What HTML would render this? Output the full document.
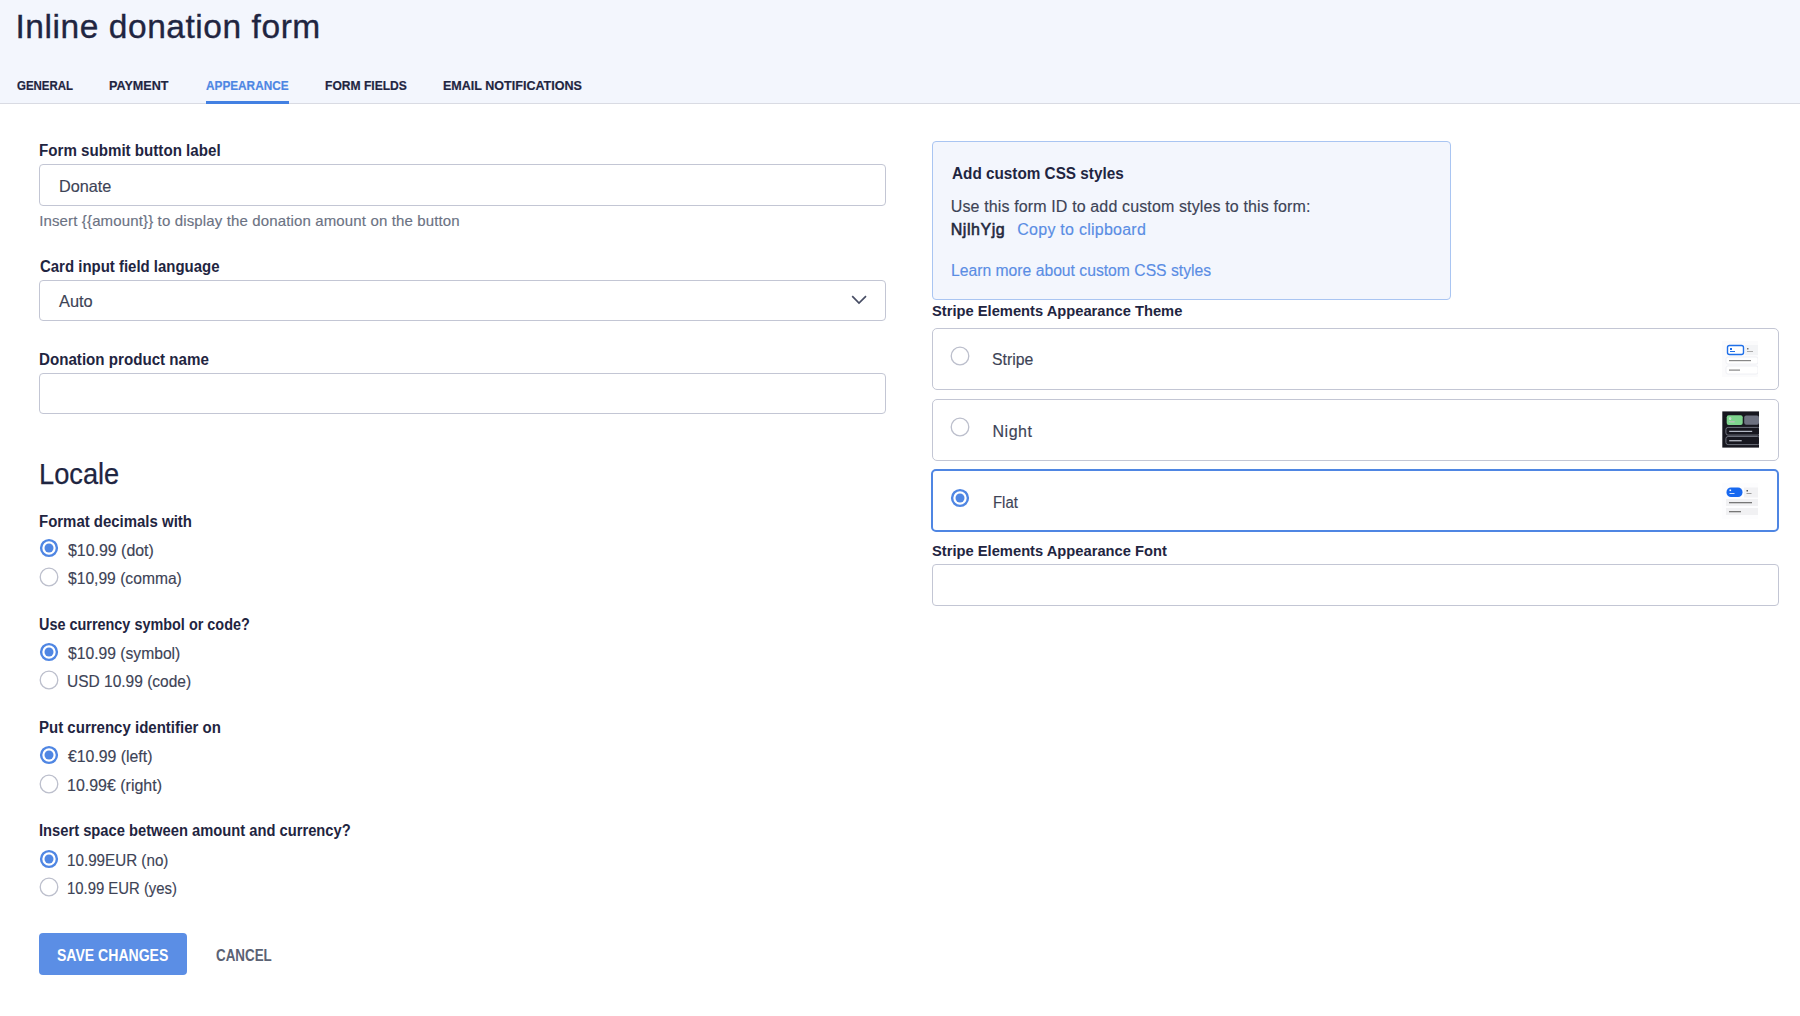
<!DOCTYPE html>
<html><head><meta charset="utf-8"><title>Inline donation form</title>
<style>
html,body{margin:0;padding:0;}
body{width:1800px;height:1016px;position:relative;overflow:hidden;background:#fff;font-family:"Liberation Sans",sans-serif;}
.t{position:absolute;white-space:nowrap;}
.hdr{position:absolute;left:0;top:0;width:1800px;height:103px;background:#f3f6fd;border-bottom:1px solid #d9dbe3;}
.ul{position:absolute;left:206px;top:101px;width:83px;height:3px;background:#4280e2;}
.box{position:absolute;box-sizing:border-box;border:1px solid #c3c6d4;border-radius:4px;background:#fff;}
.css{position:absolute;box-sizing:border-box;left:932px;top:141px;width:519px;height:159px;border:1px solid #a9c5f2;border-radius:4px;background:#f3f6fd;}
.card{position:absolute;box-sizing:border-box;left:932px;width:847px;height:62px;border:1px solid #c3c6d4;border-radius:5px;background:#fff;}
.card.sel{border:2px solid #4f86e3;}
.btn{position:absolute;left:39px;top:933px;width:148px;height:42px;border-radius:4px;background:#5b8ee5;}
.th{position:absolute;}
</style></head><body>
<div class="hdr"></div>
<div class="ul"></div>
<div class="box" style="left:39px;top:164px;width:847px;height:42px"></div>
<div class="box" style="left:39px;top:280px;width:847px;height:41px"></div>
<div class="box" style="left:39px;top:373px;width:847px;height:41px"></div>
<svg class="th" style="left:849px;top:292px" width="20" height="14" viewBox="0 0 20 14"><path d="M3.2 4.2 L10 11 L17 4.2" fill="none" stroke="#474d64" stroke-width="1.7"/></svg>
<div class="css"></div>
<div class="card" style="top:328px"></div>
<div class="card" style="top:399px"></div>
<div class="card sel" style="left:931px;top:469px;width:848px;height:63px"></div>
<div class="box" style="left:932px;top:564px;width:847px;height:42px"></div>
<div class="btn"></div>
<svg class="th" style="left:1722px;top:341px" width="36" height="36" viewBox="0 0 36 36">
<rect x="0" y="0" width="36" height="36" fill="#fbfbfc"/>
<rect x="5.5" y="4.5" width="16" height="9" rx="2" fill="#fff" stroke="#1f6fe8" stroke-width="1.4"/>
<rect x="8" y="7" width="2" height="2" fill="#1f6fe8"/><rect x="8" y="10" width="5" height="1" fill="#1f6fe8"/>
<rect x="23" y="4" width="13" height="10" fill="#f3f4f6"/><rect x="25" y="7" width="1.5" height="1.5" fill="#777"/><rect x="25" y="10" width="6" height="0.8" fill="#999"/>
<rect x="4" y="16" width="32" height="7" rx="2" fill="#fff" stroke="#eceef2" stroke-width="0.8"/>
<rect x="7" y="19" width="22" height="1.2" fill="#888"/>
<rect x="4" y="25" width="32" height="8" rx="2" fill="#fff" stroke="#eceef2" stroke-width="0.8"/>
<rect x="7" y="28.5" width="11" height="1.2" fill="#888"/>
</svg>
<svg class="th" style="left:1722px;top:411px" width="37" height="37" viewBox="0 0 37 37">
<rect x="0.3" y="0.4" width="36.7" height="36.2" fill="#17171f"/>
<rect x="4.7" y="4.3" width="16" height="9.7" rx="2" fill="#7fd48e"/>
<rect x="7.5" y="6.5" width="1.2" height="2.2" fill="#fff"/><rect x="7.5" y="10.3" width="5" height="0.9" fill="#e8f5ea"/>
<rect x="22.2" y="4.5" width="14.8" height="9.3" rx="2" fill="#6d7180"/>
<rect x="8" y="6.8" width="1.4" height="1.4" fill="#ccc"/><rect x="8" y="10.3" width="5" height="0.8" fill="#aaa"/>
<rect x="3.9" y="16.4" width="34" height="7.7" rx="2.2" fill="none" stroke="#777a86" stroke-width="0.9"/>
<rect x="7.2" y="19.8" width="23" height="1.1" fill="#c5cad6"/>
<rect x="3.9" y="25.5" width="34" height="8.1" rx="2.2" fill="none" stroke="#777a86" stroke-width="0.9"/>
<rect x="7.2" y="29.2" width="12.5" height="1.1" fill="#d0d4de"/>
</svg>
<svg class="th" style="left:1722px;top:483px" width="36" height="36" viewBox="0 0 36 36">
<rect x="0" y="0" width="36" height="36" fill="#fdfdfe"/>
<rect x="4.5" y="4.5" width="16" height="9.5" rx="4.5" fill="#1768f0"/>
<rect x="7.5" y="6.5" width="1.6" height="1.6" fill="#fff"/><rect x="7.5" y="10" width="5" height="0.8" fill="#fff"/>
<rect x="22" y="4.5" width="14" height="10" fill="#f2f2f4"/><rect x="24.5" y="7" width="1.5" height="1.5" fill="#555"/><rect x="24.5" y="10" width="5" height="0.8" fill="#888"/>
<rect x="4" y="16" width="32" height="7" fill="#f1f1f3"/>
<rect x="7" y="19" width="23" height="1.3" fill="#777"/>
<rect x="4" y="25" width="32" height="7" fill="#f1f1f3"/>
<rect x="7" y="28" width="12" height="1.3" fill="#777"/>
</svg>
<svg class="th" style="left:38.5px;top:538.4px" width="20" height="20" viewBox="0 0 20 20"><circle cx="10" cy="10" r="7.9" fill="#fff" stroke="#4f86e3" stroke-width="2.4"/><circle cx="10" cy="10" r="4.5" fill="#4f86e3"/></svg><svg class="th" style="left:38.5px;top:566.9px" width="20" height="20" viewBox="0 0 20 20"><circle cx="10" cy="10" r="8.8" fill="#fff" stroke="#bcbfcc" stroke-width="1.3"/></svg><svg class="th" style="left:38.5px;top:641.8px" width="20" height="20" viewBox="0 0 20 20"><circle cx="10" cy="10" r="7.9" fill="#fff" stroke="#4f86e3" stroke-width="2.4"/><circle cx="10" cy="10" r="4.5" fill="#4f86e3"/></svg><svg class="th" style="left:38.5px;top:670.3px" width="20" height="20" viewBox="0 0 20 20"><circle cx="10" cy="10" r="8.8" fill="#fff" stroke="#bcbfcc" stroke-width="1.3"/></svg><svg class="th" style="left:38.5px;top:745.1px" width="20" height="20" viewBox="0 0 20 20"><circle cx="10" cy="10" r="7.9" fill="#fff" stroke="#4f86e3" stroke-width="2.4"/><circle cx="10" cy="10" r="4.5" fill="#4f86e3"/></svg><svg class="th" style="left:38.5px;top:773.6px" width="20" height="20" viewBox="0 0 20 20"><circle cx="10" cy="10" r="8.8" fill="#fff" stroke="#bcbfcc" stroke-width="1.3"/></svg><svg class="th" style="left:38.5px;top:848.6px" width="20" height="20" viewBox="0 0 20 20"><circle cx="10" cy="10" r="7.9" fill="#fff" stroke="#4f86e3" stroke-width="2.4"/><circle cx="10" cy="10" r="4.5" fill="#4f86e3"/></svg><svg class="th" style="left:38.5px;top:877.1px" width="20" height="20" viewBox="0 0 20 20"><circle cx="10" cy="10" r="8.8" fill="#fff" stroke="#bcbfcc" stroke-width="1.3"/></svg><svg class="th" style="left:950.3px;top:346.3px" width="20" height="20" viewBox="0 0 20 20"><circle cx="10" cy="10" r="8.8" fill="#fff" stroke="#bcbfcc" stroke-width="1.3"/></svg><svg class="th" style="left:950.3px;top:417.4px" width="20" height="20" viewBox="0 0 20 20"><circle cx="10" cy="10" r="8.8" fill="#fff" stroke="#bcbfcc" stroke-width="1.3"/></svg><svg class="th" style="left:950.3px;top:488.2px" width="20" height="20" viewBox="0 0 20 20"><circle cx="10" cy="10" r="7.9" fill="#fff" stroke="#4f86e3" stroke-width="2.4"/><circle cx="10" cy="10" r="4.5" fill="#4f86e3"/></svg>
<div class="t" style="left:15.50px;top:10.00px;font-size:33.5px;line-height:33.5px;letter-spacing:0.553px;color:#1f2541;font-weight:400;-webkit-text-stroke:0.35px #1f2541">Inline donation form</div>
<div class="t" style="left:16.70px;top:79.00px;font-size:13.5px;line-height:13.5px;letter-spacing:0.000px;color:#1f2541;font-weight:700;transform:scaleX(0.8500);transform-origin:0 0;-webkit-text-stroke:0.2px #1f2541">GENERAL</div>
<div class="t" style="left:109.07px;top:79.00px;font-size:13.5px;line-height:13.5px;letter-spacing:0.000px;color:#1f2541;font-weight:700;transform:scaleX(0.9317);transform-origin:0 0;-webkit-text-stroke:0.2px #1f2541">PAYMENT</div>
<div class="t" style="left:206.20px;top:79.00px;font-size:13.5px;line-height:13.5px;letter-spacing:0.000px;color:#4d86e3;font-weight:700;transform:scaleX(0.8734);transform-origin:0 0;-webkit-text-stroke:0.2px #4d86e3">APPEARANCE</div>
<div class="t" style="left:324.91px;top:79.00px;font-size:13.5px;line-height:13.5px;letter-spacing:0.000px;color:#1f2541;font-weight:700;transform:scaleX(0.8944);transform-origin:0 0;-webkit-text-stroke:0.2px #1f2541">FORM FIELDS</div>
<div class="t" style="left:442.77px;top:79.00px;font-size:13.5px;line-height:13.5px;letter-spacing:0.000px;color:#1f2541;font-weight:700;transform:scaleX(0.9291);transform-origin:0 0;-webkit-text-stroke:0.2px #1f2541">EMAIL NOTIFICATIONS</div>
<div class="t" style="left:38.75px;top:143.00px;font-size:16px;line-height:16px;letter-spacing:0.000px;color:#1f2541;font-weight:700;transform:scaleX(0.9458);transform-origin:0 0;">Form submit button label</div>
<div class="t" style="left:58.52px;top:178.00px;font-size:16.5px;line-height:16.5px;letter-spacing:0.000px;color:#3d4356;font-weight:400;transform:scaleX(0.9846);transform-origin:0 0;-webkit-text-stroke:0.15px currentColor">Donate</div>
<div class="t" style="left:39.20px;top:213.00px;font-size:15px;line-height:15px;letter-spacing:0.139px;color:#6b7283;font-weight:400;-webkit-text-stroke:0.15px currentColor">Insert {{amount}} to display the donation amount on the button</div>
<div class="t" style="left:40.00px;top:259.00px;font-size:16px;line-height:16px;letter-spacing:0.000px;color:#1f2541;font-weight:700;transform:scaleX(0.9349);transform-origin:0 0;">Card input field language</div>
<div class="t" style="left:59.20px;top:293.00px;font-size:16.5px;line-height:16.5px;letter-spacing:0.000px;color:#3d4356;font-weight:400;transform:scaleX(0.9941);transform-origin:0 0;-webkit-text-stroke:0.15px currentColor">Auto</div>
<div class="t" style="left:39.35px;top:352.00px;font-size:16px;line-height:16px;letter-spacing:0.000px;color:#1f2541;font-weight:700;transform:scaleX(0.9461);transform-origin:0 0;">Donation product name</div>
<div class="t" style="left:39.25px;top:459.00px;font-size:29.5px;line-height:29.5px;letter-spacing:0.000px;color:#1f2541;font-weight:400;transform:scaleX(0.9226);transform-origin:0 0;-webkit-text-stroke:0.25px #1f2541">Locale</div>
<div class="t" style="left:38.87px;top:514.00px;font-size:16px;line-height:16px;letter-spacing:0.000px;color:#1f2541;font-weight:700;transform:scaleX(0.9346);transform-origin:0 0;">Format decimals with</div>
<div class="t" style="left:67.60px;top:542.00px;font-size:16.5px;line-height:16.5px;letter-spacing:0.000px;color:#3d4356;font-weight:400;transform:scaleX(0.9648);transform-origin:0 0;-webkit-text-stroke:0.15px currentColor">$10.99 (dot)</div>
<div class="t" style="left:67.60px;top:570.00px;font-size:16.5px;line-height:16.5px;letter-spacing:0.000px;color:#3d4356;font-weight:400;transform:scaleX(0.9475);transform-origin:0 0;-webkit-text-stroke:0.15px currentColor">$10,99 (comma)</div>
<div class="t" style="left:38.90px;top:617.00px;font-size:16px;line-height:16px;letter-spacing:0.000px;color:#1f2541;font-weight:700;transform:scaleX(0.9013);transform-origin:0 0;">Use currency symbol or code?</div>
<div class="t" style="left:67.60px;top:645.00px;font-size:16.5px;line-height:16.5px;letter-spacing:0.000px;color:#3d4356;font-weight:400;transform:scaleX(0.9492);transform-origin:0 0;-webkit-text-stroke:0.15px currentColor">$10.99 (symbol)</div>
<div class="t" style="left:66.66px;top:673.00px;font-size:16.5px;line-height:16.5px;letter-spacing:0.000px;color:#3d4356;font-weight:400;transform:scaleX(0.9400);transform-origin:0 0;-webkit-text-stroke:0.15px currentColor">USD 10.99 (code)</div>
<div class="t" style="left:38.86px;top:720.00px;font-size:16px;line-height:16px;letter-spacing:0.000px;color:#1f2541;font-weight:700;transform:scaleX(0.9385);transform-origin:0 0;">Put currency identifier on</div>
<div class="t" style="left:67.60px;top:748.00px;font-size:16.5px;line-height:16.5px;letter-spacing:0.000px;color:#3d4356;font-weight:400;transform:scaleX(0.9586);transform-origin:0 0;-webkit-text-stroke:0.15px currentColor">€10.99 (left)</div>
<div class="t" style="left:66.63px;top:777.00px;font-size:16.5px;line-height:16.5px;letter-spacing:0.000px;color:#3d4356;font-weight:400;transform:scaleX(0.9680);transform-origin:0 0;-webkit-text-stroke:0.15px currentColor">10.99€ (right)</div>
<div class="t" style="left:38.88px;top:823.00px;font-size:16px;line-height:16px;letter-spacing:0.000px;color:#1f2541;font-weight:700;transform:scaleX(0.9202);transform-origin:0 0;">Insert space between amount and currency?</div>
<div class="t" style="left:66.68px;top:852.00px;font-size:16.5px;line-height:16.5px;letter-spacing:0.000px;color:#3d4356;font-weight:400;transform:scaleX(0.9213);transform-origin:0 0;-webkit-text-stroke:0.15px currentColor">10.99EUR (no)</div>
<div class="t" style="left:66.70px;top:880.00px;font-size:16.5px;line-height:16.5px;letter-spacing:0.000px;color:#3d4356;font-weight:400;transform:scaleX(0.9017);transform-origin:0 0;-webkit-text-stroke:0.15px currentColor">10.99 EUR (yes)</div>
<div class="t" style="left:56.92px;top:948.00px;font-size:16.0px;line-height:16.0px;letter-spacing:0.000px;color:#ffffff;font-weight:700;transform:scaleX(0.8778);transform-origin:0 0;">SAVE CHANGES</div>
<div class="t" style="left:215.70px;top:948.00px;font-size:16.0px;line-height:16.0px;letter-spacing:0.000px;color:#5b6274;font-weight:700;transform:scaleX(0.8358);transform-origin:0 0;">CANCEL</div>
<div class="t" style="left:951.70px;top:166.00px;font-size:16px;line-height:16px;letter-spacing:0.000px;color:#1f2541;font-weight:700;transform:scaleX(0.9559);transform-origin:0 0;">Add custom CSS styles</div>
<div class="t" style="left:950.70px;top:199.00px;font-size:16px;line-height:16px;letter-spacing:0.136px;color:#3d4356;font-weight:400;-webkit-text-stroke:0.15px currentColor">Use this form ID to add custom styles to this form:</div>
<div class="t" style="left:950.70px;top:222.00px;font-size:16px;line-height:16px;letter-spacing:0.550px;color:#23283d;font-weight:400;-webkit-text-stroke:0.55px #23283d">NjlhYjg</div>
<div class="t" style="left:1017.30px;top:222.00px;font-size:16.0px;line-height:16.0px;letter-spacing:0.250px;color:#5a8de4;font-weight:400;-webkit-text-stroke:0.15px currentColor">Copy to clipboard</div>
<div class="t" style="left:950.72px;top:263.00px;font-size:16.0px;line-height:16.0px;letter-spacing:0.000px;color:#5a8de4;font-weight:400;transform:scaleX(0.9814);transform-origin:0 0;-webkit-text-stroke:0.15px currentColor">Learn more about custom CSS styles</div>
<div class="t" style="left:931.55px;top:303.00px;font-size:15.5px;line-height:15.5px;letter-spacing:0.000px;color:#1f2541;font-weight:700;transform:scaleX(0.9487);transform-origin:0 0;">Stripe Elements Appearance Theme</div>
<div class="t" style="left:992.31px;top:352.00px;font-size:16.0px;line-height:16.0px;letter-spacing:0.000px;color:#3d4356;font-weight:400;transform:scaleX(0.9878);transform-origin:0 0;-webkit-text-stroke:0.15px currentColor">Stripe</div>
<div class="t" style="left:992.60px;top:424.00px;font-size:16.0px;line-height:16.0px;letter-spacing:0.475px;color:#3d4356;font-weight:400;-webkit-text-stroke:0.15px currentColor">Night</div>
<div class="t" style="left:992.67px;top:495.00px;font-size:16.0px;line-height:16.0px;letter-spacing:0.000px;color:#3d4356;font-weight:400;transform:scaleX(0.9308);transform-origin:0 0;-webkit-text-stroke:0.15px currentColor">Flat</div>
<div class="t" style="left:931.55px;top:543.00px;font-size:15.5px;line-height:15.5px;letter-spacing:0.000px;color:#1f2541;font-weight:700;transform:scaleX(0.9492);transform-origin:0 0;">Stripe Elements Appearance Font</div>
</body></html>
